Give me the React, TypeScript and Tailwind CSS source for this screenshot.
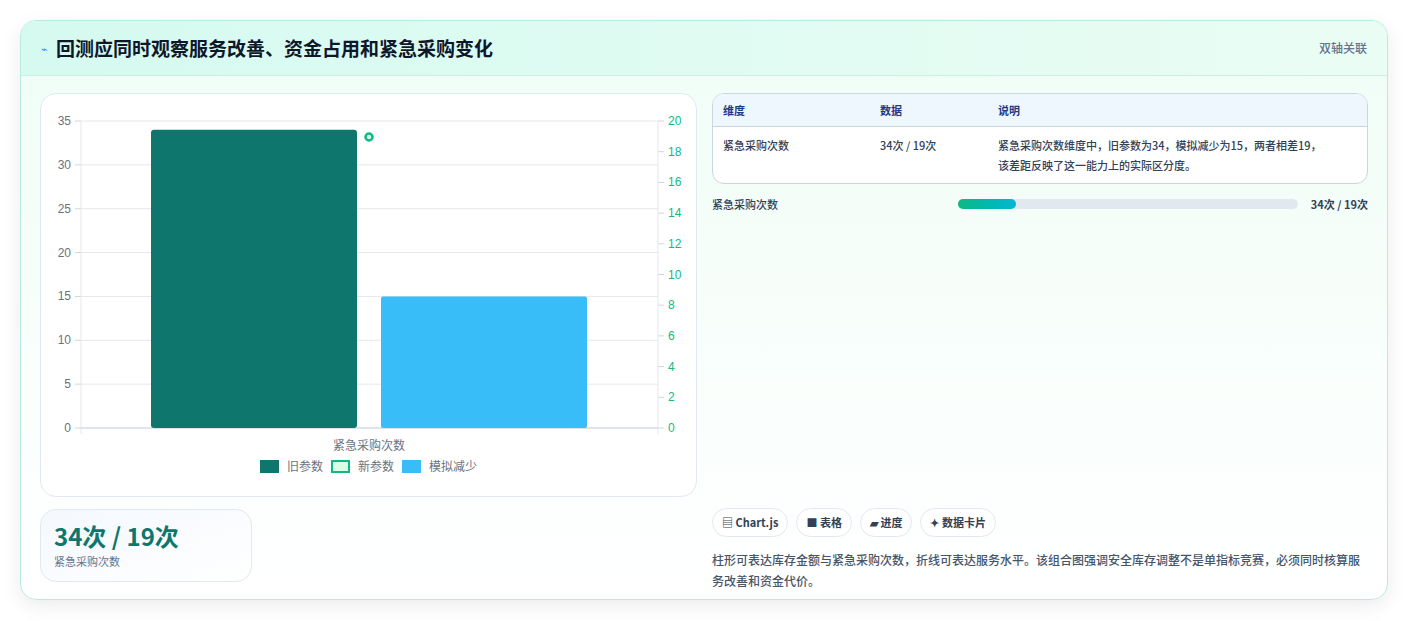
import React from "react";

const F = { fontFamily: '"Noto Sans CJK SC","Noto Sans",sans-serif' };

function Chart() {
  const L = 40, R = 617, T = 22, B = 329;
  const lt = [0, 5, 10, 15, 20, 25, 30, 35];
  const rt = [0, 2, 4, 6, 8, 10, 12, 14, 16, 18, 20];
  const yl = (v: number) => B - (v / 35) * (B - T);
  const yr = (v: number) => B - (v / 20) * (B - T);
  return (
    <svg width="656" height="360" className="block">
      {lt.map((v) => (
        <g key={v}>
          <line x1={L} x2={R} y1={yl(v)} y2={yl(v)} stroke="#e5e7eb" />
          <line x1={L - 6} x2={L} y1={yl(v)} y2={yl(v)} stroke="#d1d5db" />
          <text x={L - 10} y={yl(v) + 4} textAnchor="end" fontSize="12" fill="#6b7280" fontFamily="Liberation Sans, sans-serif">{v}</text>
        </g>
      ))}
      {rt.map((v) => (
        <g key={v}>
          <line x1={R} x2={R + 6} y1={yr(v)} y2={yr(v)} stroke="#d1d5db" />
          <text x={R + 10} y={yr(v) + 4} fontSize="12" fill="#10b981" fontFamily="Liberation Sans, sans-serif">{v}</text>
        </g>
      ))}
      <line x1={L} x2={L} y1={T} y2={B + 6} stroke="#e5e7eb" />
      <line x1={R} x2={R} y1={T} y2={B + 6} stroke="#e5e7eb" />
      <line x1={L} x2={R} y1={B} y2={B} stroke="#cbd5e1" />
      <rect x={110} y={yl(34)} width={206} height={B - yl(34)} rx="3" fill="#0f766e" />
      <rect x={340} y={yl(15)} width={206} height={B - yl(15)} rx="2" fill="#38bdf8" />
      <circle cx={328} cy={38} r={3.5} fill="#d1fae5" stroke="#10b981" strokeWidth="2.5" />
      <text x={328} y={351} textAnchor="middle" fontSize="12" fill="#6b7280" style={F}>紧急采购次数</text>
    </svg>
  );
}

export default function App() {
  return (
    <div className="w-[1408px] h-[620px] bg-white p-5 pb-5" style={F}>
      <div className="h-[580px] rounded-2xl border border-[#b9ebe3] shadow-[0_6px_20px_rgba(0,0,0,0.08)] overflow-hidden bg-gradient-to-b from-[#effdf6] to-white flex flex-col">
        <div className="h-[55px] flex items-center justify-between px-5 bg-gradient-to-r from-[#d5faf0] to-[#eafdf4] border-b border-[#cdeee6]">
          <div className="flex items-center gap-2">
            <span className="text-[#3b82f6] text-[11px]">⌁</span>
            <span className="text-[19px] font-bold text-[#0f172a]">回测应同时观察服务改善、资金占用和紧急采购变化</span>
          </div>
          <span className="text-[12px] text-[#64748b] font-medium">双轴关联</span>
        </div>
        <div className="flex gap-[15px] px-[19px] pt-[17px]">
          <div className="w-[657px] flex flex-col gap-3">
            <div className="h-[404px] rounded-2xl border border-[#e2e8f0] bg-white">
              <div className="pt-[5px]"><Chart /></div>
              <div className="flex justify-center items-center gap-2 text-[12px] text-[#6b7280] -mt-[2px]">
                <span className="w-[19px] h-[13px] bg-[#0f766e]" /><span>旧参数</span>
                <span className="w-[19px] h-[13px] bg-[#dcfce7] border-[2.5px] border-[#10b981]" /><span>新参数</span>
                <span className="w-[19px] h-[13px] bg-[#38bdf8]" /><span>模拟减少</span>
              </div>
            </div>
            <div className="w-[212px] h-[73px] rounded-2xl border border-[#e2e8f0] bg-gradient-to-br from-[#f4f8fd] to-white px-[13px] pt-[9px]">
              <div className="text-[24px] font-bold text-[#0f766e] leading-[34px]">34次 / 19次</div>
              <div className="text-[11px] text-[#64748b]">紧急采购次数</div>
            </div>
          </div>
          <div className="flex-1 flex flex-col">
            <div className="rounded-xl border border-[#cbd5e1] overflow-hidden bg-white text-[11px]">
              <div className="flex h-[33px] items-center bg-[#eef6fe] border-b border-[#cbd5e1] text-[#1e3a8a] font-semibold">
                <div className="w-[157px] pl-[10px]">维度</div>
                <div className="w-[118px] pl-[10px]">数据</div>
                <div className="flex-1 pl-[10px]">说明</div>
              </div>
              <div className="flex py-[8px] text-[#334155] font-medium leading-[20px]">
                <div className="w-[157px] pl-[10px]">紧急采购次数</div>
                <div className="w-[118px] pl-[10px]">34次 / 19次</div>
                <div className="flex-1 pl-[10px]">紧急采购次数维度中，旧参数为34，模拟减少为15，两者相差19，<br />该差距反映了这一能力上的实际区分度。</div>
              </div>
            </div>
            <div className="flex items-center mt-[12px] text-[11px] font-medium text-[#334155]">
              <div className="w-[246px]">紧急采购次数</div>
              <div className="w-[340px] h-[10px] rounded-full bg-[#e2e8f0]"><div className="w-[58px] h-full rounded-full bg-gradient-to-r from-[#10b981] to-[#06b6d4]" /></div>
              <div className="ml-auto font-bold">34次 / 19次</div>
            </div>
            <div className="flex gap-2 mt-[295px] text-[11px] font-semibold text-[#334155]">
              {["▤ Chart.js", "■ 表格", "▰ 进度", "✦ 数据卡片"].map((t) => (
                <span key={t} className="h-[29px] px-[9px] flex items-center rounded-full border border-[#e2e8f0] bg-white">{t}</span>
              ))}
            </div>
            <div className="mt-[12px] text-[12px] leading-[21px] text-[#475569] font-medium">柱形可表达库存金额与紧急采购次数，折线可表达服务水平。该组合图强调安全库存调整不是单指标竞赛，必须同时核算服务改善和资金代价。</div>
          </div>
        </div>
      </div>
    </div>
  );
}
